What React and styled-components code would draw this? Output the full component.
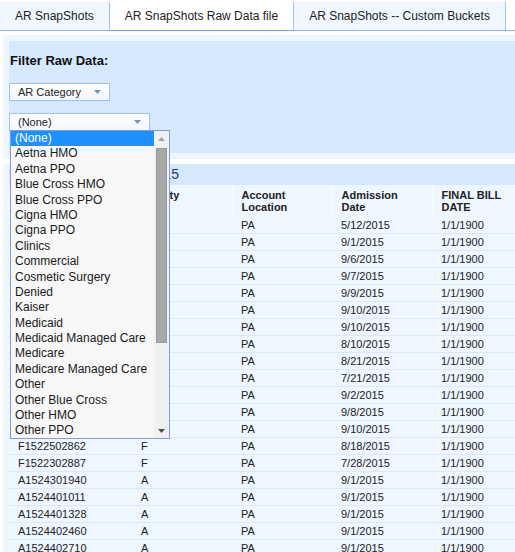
import React from "react";
import styled, { createGlobalStyle } from "styled-components";

const GlobalStyle = createGlobalStyle`
  body {
    margin: 0;
    background: #ffffff;
    font-family: "Liberation Sans", Arial, sans-serif;
    color: #222222;
    overflow: hidden;
  }
`;

const categories = [
  "(None)", "Aetna HMO", "Aetna PPO", "Blue Cross HMO", "Blue Cross PPO",
  "Cigna HMO", "Cigna PPO", "Clinics", "Commercial", "Cosmetic Surgery",
  "Denied", "Kaiser", "Medicaid", "Medicaid Managed Care", "Medicare",
  "Medicare Managed Care", "Other", "Other Blue Cross", "Other HMO", "Other PPO",
];

const rows = [
  ["F1513202114", "F", "PA", "5/12/2015", "1/1/1900"],
  ["A1524400118", "A", "PA", "9/1/2015", "1/1/1900"],
  ["A1524900213", "A", "PA", "9/6/2015", "1/1/1900"],
  ["A1525000442", "A", "PA", "9/7/2015", "1/1/1900"],
  ["A1525200071", "A", "PA", "9/9/2015", "1/1/1900"],
  ["A1525300310", "A", "PA", "9/10/2015", "1/1/1900"],
  ["A1525300512", "A", "PA", "9/10/2015", "1/1/1900"],
  ["F1522202391", "F", "PA", "8/10/2015", "1/1/1900"],
  ["F1523302650", "F", "PA", "8/21/2015", "1/1/1900"],
  ["F1520202473", "F", "PA", "7/21/2015", "1/1/1900"],
  ["A1524500926", "A", "PA", "9/2/2015", "1/1/1900"],
  ["A1525100634", "A", "PA", "9/8/2015", "1/1/1900"],
  ["A1525300877", "A", "PA", "9/10/2015", "1/1/1900"],
  ["F1522502862", "F", "PA", "8/18/2015", "1/1/1900"],
  ["F1522302887", "F", "PA", "7/28/2015", "1/1/1900"],
  ["A1524301940", "A", "PA", "9/1/2015", "1/1/1900"],
  ["A1524401011", "A", "PA", "9/1/2015", "1/1/1900"],
  ["A1524401328", "A", "PA", "9/1/2015", "1/1/1900"],
  ["A1524402460", "A", "PA", "9/1/2015", "1/1/1900"],
  ["A1524402710", "A", "PA", "9/1/2015", "1/1/1900"],
];

const columns = ["Account Number", "Facility", "Account Location", "Admission Date", "FINAL BILL DATE"];
const widths = [123, 100, 100, 100, 100];

const Caret = ({ up }) => (
  <svg width="7" height="4" viewBox="0 0 7 4">
    <path d={up ? "M0 4 L3.5 0 L7 4 Z" : "M0 0 L7 0 L3.5 4 Z"} fill="currentColor" />
  </svg>
);

const App = () => {
  return (
    <Page>
      <GlobalStyle />
      <TabBar>
        <Tab>AR SnapShots</Tab>
        <Tab active>AR SnapShots Raw Data file</Tab>
        <Tab>AR SnapShots -- Custom Buckets</Tab>
      </TabBar>

      <FilterOuter>
        <FilterPanel>
          <FilterTitle>Filter Raw Data:</FilterTitle>
          <Select width={101}>
            <span>AR Category</span>
            <SelectArrow><Caret /></SelectArrow>
          </Select>
          <SelectHolder>
            <Select width={141}>
              <span>(None)</span>
              <SelectArrow><Caret /></SelectArrow>
            </Select>
            <ListBox>
              <Options>
                {categories.map((c, i) => (
                  <Option key={c} selected={i === 0}>{c}</Option>
                ))}
              </Options>
              <ScrollTrack>
                <ScrollArrow><Caret up /></ScrollArrow>
                <Thumb />
                <ScrollArrow bottom><Caret /></ScrollArrow>
              </ScrollTrack>
            </ListBox>
          </SelectHolder>
        </FilterPanel>
      </FilterOuter>

      <TableSection>
        <TitleBand>Raw Data as of 9/5/2015</TitleBand>
        <Grid>
          <colgroup>
            {widths.map((w, i) => <col key={i} style={{ width: w }} />)}
          </colgroup>
          <thead>
            <tr>
              {columns.map((c) => <Th key={c}>{c}</Th>)}
            </tr>
          </thead>
          <tbody>
            {rows.map((r, i) => (
              <tr key={i}>
                {r.map((v, j) => <Td key={j}>{v}</Td>)}
              </tr>
            ))}
          </tbody>
        </Grid>
      </TableSection>
    </Page>
  );
};

export default App;

const Page = styled.div`
  width: 515px;
  height: 552px;
  overflow: hidden;
`;

const TabBar = styled.div`
  display: flex;
  height: 28px;
  padding-top: 2px;
  border-bottom: 1px solid #8db6e4;
`;

const Tab = styled.div`
  display: flex;
  align-items: center;
  padding: 0 15px;
  font-size: 12px;
  color: #222;
  background: ${(p) => (p.active ? "#ffffff" : "#f0f7ff")};
  border-right: 1px solid #9cc2ec;
  border-bottom: ${(p) => (p.active ? "1px solid #6fa3de" : "none")};
  margin-bottom: ${(p) => (p.active ? "-1px" : "0")};
`;

const FilterOuter = styled.div`
  margin: 4px 0 0 3px;
  padding: 6px 0 6px 6px;
  background: #eef6ff;
`;

const FilterPanel = styled.div`
  height: 112px;
  background: #d5e8fe;
  padding: 12px 0 0 0;
  box-sizing: border-box;
`;

const FilterTitle = styled.div`
  font-size: 13px;
  font-weight: bold;
  color: #111;
  margin: 0 0 0 1px;
  height: 30px;
`;

const Select = styled.div`
  position: relative;
  width: ${(p) => p.width}px;
  height: 18px;
  box-sizing: border-box;
  border: 1px solid #9dc3ef;
  background: linear-gradient(#ffffff, #f1f7ff);
  font-size: 11px;
  color: #222;
  display: flex;
  align-items: center;
  padding-left: 8px;
`;

const SelectArrow = styled.span`
  position: absolute;
  right: 8px;
  top: 6px;
  color: #6f95c8;
  display: flex;
`;

const SelectHolder = styled.div`
  position: relative;
  margin-top: 12px;
  width: 141px;
`;

const ListBox = styled.div`
  position: absolute;
  top: 17px;
  left: 1px;
  width: 160px;
  height: 309px;
  box-sizing: border-box;
  border: 1px solid #7e9fd8;
  background: #f7f7f7;
  display: flex;
  z-index: 5;
`;

const Options = styled.div`
  flex: 1;
`;

const Option = styled.div`
  height: 15.4px;
  line-height: 15.4px;
  font-size: 12px;
  padding-left: 4px;
  white-space: nowrap;
  color: ${(p) => (p.selected ? "#ffffff" : "#1a1a1a")};
  background: ${(p) => (p.selected ? "#1e90ff" : "transparent")};
`;

const ScrollTrack = styled.div`
  position: relative;
  width: 15px;
  background: #f0f0f0;
`;

const ScrollArrow = styled.div`
  position: absolute;
  left: 0;
  width: 15px;
  height: 15px;
  display: flex;
  align-items: center;
  justify-content: center;
  color: ${(p) => (p.bottom ? "#505050" : "#a3a3a3")};
  ${(p) => (p.bottom ? "bottom: 0;" : "top: 0;")}
`;

const Thumb = styled.div`
  position: absolute;
  left: 2px;
  top: 17px;
  width: 11px;
  height: 195px;
  background: #a8a8a8;
  border: 1px solid #9a9a9a;
  box-sizing: border-box;
`;

const TableSection = styled.div`
  margin: 5px 0 0 3px;
  padding-left: 6px;
  background: #eef6ff;
`;

const TitleBand = styled.div`
  height: 21px;
  line-height: 21px;
  background: #d5e8fe;
  font-size: 14px;
  color: #1f3c66;
  padding-left: 16px;
  white-space: nowrap;
`;

const Grid = styled.table`
  border-collapse: collapse;
  table-layout: fixed;
  width: 523px;
  font-size: 11px;
`;

const Th = styled.th`
  text-align: left;
  vertical-align: top;
  font-weight: bold;
  color: #222;
  line-height: 12px;
  padding: 4px 9px 0 9px;
  height: 28px;
  border-left: 1px solid #f9fcff;
  &:first-child { border-left: none; }
`;

const Td = styled.td`
  height: 16px;
  line-height: 16px;
  padding: 0 9px;
  color: #222;
  white-space: nowrap;
  border-bottom: 1px solid #dbe8f7;
`;
